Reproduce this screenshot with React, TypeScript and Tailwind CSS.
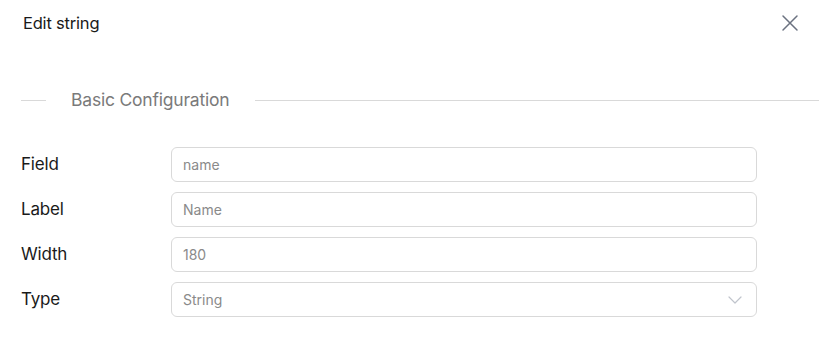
import React from "react";

const rows = [
  { label: "Field", value: "name" },
  { label: "Label", value: "Name" },
  { label: "Width", value: "180" },
];

export default function App() {
  return (
    <div className="w-[819px] h-[339px] bg-white font-['Inter','Liberation_Sans',sans-serif] overflow-hidden">
      <div className="flex items-center justify-between pl-[23px] pr-[20px] pt-[0px] h-[46px]">
        <div className="text-[16.5px] text-[#1a1a1a] tracking-[-0.2px]">Edit string</div>
        <svg width="18" height="18" viewBox="0 0 18 18" fill="none" stroke="#6b7280" strokeWidth="1.5" strokeLinecap="round">
          <path d="M2 2L16 16M16 2L2 16" />
        </svg>
      </div>
      <div className="flex items-center mt-[32px] pl-[21px] h-[44px]">
        <div className="w-[25px] h-px bg-[#d9d9d9]" />
        <div className="px-[25px] text-[17.5px] text-[#7a7a7a] tracking-[-0.2px]">Basic Configuration</div>
        <div className="flex-1 h-px bg-[#d9d9d9]" />
      </div>
      <div className="flex flex-col gap-[10px] mt-[25px] pl-[21px]">
        {rows.map((r) => (
          <div key={r.label} className="flex items-center">
            <div className="w-[150px] text-[17px] text-[#1a1a1a] tracking-[-0.2px]">{r.label}</div>
            <div className="w-[586px] h-[35px] border border-[#d9d9d9] rounded-[6px] flex items-center px-[11px] text-[14px] text-[#8a8a8a]">
              {r.value}
            </div>
          </div>
        ))}
        <div className="flex items-center">
          <div className="w-[150px] text-[17px] text-[#1a1a1a] tracking-[-0.2px]">Type</div>
          <div className="w-[586px] h-[35px] border border-[#d9d9d9] rounded-[6px] flex items-center justify-between pl-[11px] pr-[14px] text-[14px] text-[#8a8a8a]">
            <span>String</span>
            <svg width="14" height="8" viewBox="0 0 14 8" fill="none" stroke="#c0c4cc" strokeWidth="1.2" strokeLinecap="round" strokeLinejoin="round">
              <path d="M1 1L7 7L13 1" />
            </svg>
          </div>
        </div>
      </div>
    </div>
  );
}
